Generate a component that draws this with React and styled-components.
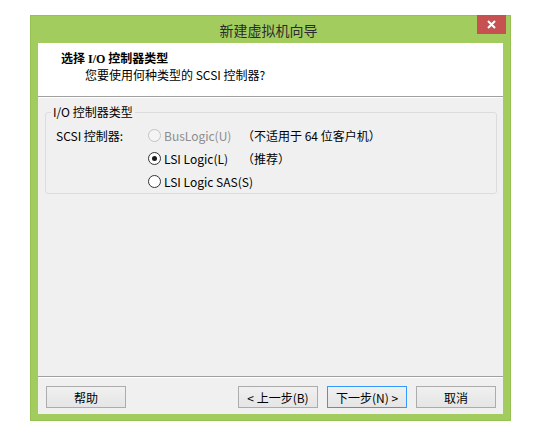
import React from "react";
import styled, { createGlobalStyle } from "styled-components";

const GlobalStyle = createGlobalStyle`
  html, body {
    margin: 0;
    padding: 0;
    background: #ffffff;
  }
  body {
    font-family: "Noto Sans CJK SC", "Noto Sans", sans-serif;
    font-size: 12px;
    color: #000;
  }
`;

const Page = styled.div`
  padding: 15px 0 0 30px;
`;

const Window = styled.div`
  width: 481px;
  height: 406px;
  box-sizing: border-box;
  background: #a2cd5e;
  border: 1px solid #97c253;
  display: flex;
  flex-direction: column;
`;

const TitleBar = styled.div`
  flex: none;
  height: 27px;
  display: grid;
  grid-template-columns: 1fr auto 1fr;
  align-items: center;
  padding-right: 4px;
`;

const Title = styled.div`
  grid-column: 2;
  font-size: 14px;
  color: #2b2b2b;
  line-height: 18px;
  padding-top: 1px;
`;

const CloseButton = styled.button`
  grid-column: 3;
  justify-self: end;
  align-self: start;
  width: 29px;
  height: 19px;
  margin-top: -1px;
  padding: 0;
  border: none;
  background: #c75050;
  display: flex;
  align-items: center;
  justify-content: center;
`;

const Client = styled.div`
  flex: 1;
  margin: 0 7px 6px 7px;
  background: #f0f0f0;
  display: flex;
  flex-direction: column;
`;

const Header = styled.div`
  flex: none;
  height: 53px;
  box-sizing: content-box;
  background: #ffffff;
  border-bottom: 1px solid #a0a0a0;
  padding: 0 0 0 23px;
  display: flex;
  flex-direction: column;
  justify-content: flex-start;
`;

const HeaderTitle = styled.div`
  margin-top: 8px;
  font-family: "Liberation Serif", "Noto Sans CJK SC", serif;
  font-weight: bold;
  font-size: 12px;
  line-height: 16px;
`;

const HeaderText = styled.div`
  padding-left: 24px;
  line-height: 16px;
`;

const Body = styled.div`
  flex: 1;
  padding: 7px 6px 0 7px;
  box-shadow: inset 0 1px #ffffff;
`;

const GroupBox = styled.fieldset`
  margin: 0;
  min-width: 0;
  border: 1px solid #dcdcdc;
  border-radius: 3px;
  padding: 4px 10px 0 10px;
`;

const Caption = styled.legend`
  padding: 0 2px;
  margin-left: -5px;
  line-height: 16px;
`;

const FormGrid = styled.div`
  display: grid;
  grid-template-columns: 92px 94px auto;
  grid-auto-rows: 23px;
  align-items: center;
`;

const FieldLabel = styled.div`
  grid-column: 1;
`;

const Option = styled.label`
  grid-column: ${(p) => (p.$wide ? "2 / 4" : "2")};
  display: flex;
  align-items: center;
  gap: 3px;
  white-space: nowrap;
  color: ${(p) => (p.$disabled ? "#8d8d8d" : "#000")};
`;

const RadioCircle = styled.span`
  flex: none;
  width: 13px;
  height: 13px;
  box-sizing: border-box;
  border-radius: 50%;
  border: 1px solid ${(p) => (p.$disabled ? "#c4c4c4" : "#333333")};
  background: ${(p) => (p.$disabled ? "#f4f4f4" : "#ffffff")};
  display: flex;
  align-items: center;
  justify-content: center;
  &::after {
    content: "";
    width: 5px;
    height: 5px;
    border-radius: 50%;
    background: #1b1b1b;
    display: ${(p) => (p.$checked ? "block" : "none")};
  }
`;

const Note = styled.div`
  grid-column: 3;
  white-space: nowrap;
`;

const Footer = styled.div`
  flex: none;
  border-top: 1px solid #a0a0a0;
  box-shadow: inset 0 1px #ffffff;
  display: flex;
  gap: 9px;
  padding: 9px 7px 6px 8px;
`;

const Button = styled.button`
  width: 80px;
  height: 22px;
  box-sizing: border-box;
  padding: 0;
  font-family: "Noto Sans CJK SC", "Noto Sans", sans-serif;
  font-size: 12px;
  color: #000;
  border: 1px solid ${(p) => (p.$default ? "#3399ff" : "#acacac")};
  background: linear-gradient(#f0f0f0, #e5e5e5);
  margin-right: ${(p) => (p.$push ? "auto" : "0")};
`;

function Radio({ label, checked, disabled, wide }) {
  return (
    <Option $disabled={disabled} $wide={wide}>
      <RadioCircle $checked={checked} $disabled={disabled} />
      {label}
    </Option>
  );
}

export default function App() {
  return (
    <>
      <GlobalStyle />
      <Page>
        <Window>
          <TitleBar>
            <Title>新建虚拟机向导</Title>
            <CloseButton aria-label="关闭">
              <svg width="9" height="9" viewBox="0 0 9 9">
                <path d="M1 1 L8 8 M8 1 L1 8" stroke="#ffffff" strokeWidth="2" />
              </svg>
            </CloseButton>
          </TitleBar>
          <Client>
            <Header>
              <HeaderTitle>选择 I/O 控制器类型</HeaderTitle>
              <HeaderText>您要使用何种类型的 SCSI 控制器?</HeaderText>
            </Header>
            <Body>
              <GroupBox>
                <Caption>I/O 控制器类型</Caption>
                <FormGrid>
                  <FieldLabel>SCSI 控制器:</FieldLabel>
                  <Radio label="BusLogic(U)" disabled />
                  <Note>（不适用于 64 位客户机）</Note>
                  <Radio label="LSI Logic(L)" checked />
                  <Note>（推荐）</Note>
                  <Radio label="LSI Logic SAS(S)" wide />
                </FormGrid>
              </GroupBox>
            </Body>
            <Footer>
              <Button $push>帮助</Button>
              <Button>&lt; 上一步(B)</Button>
              <Button $default>下一步(N) &gt;</Button>
              <Button>取消</Button>
            </Footer>
          </Client>
        </Window>
      </Page>
    </>
  );
}
